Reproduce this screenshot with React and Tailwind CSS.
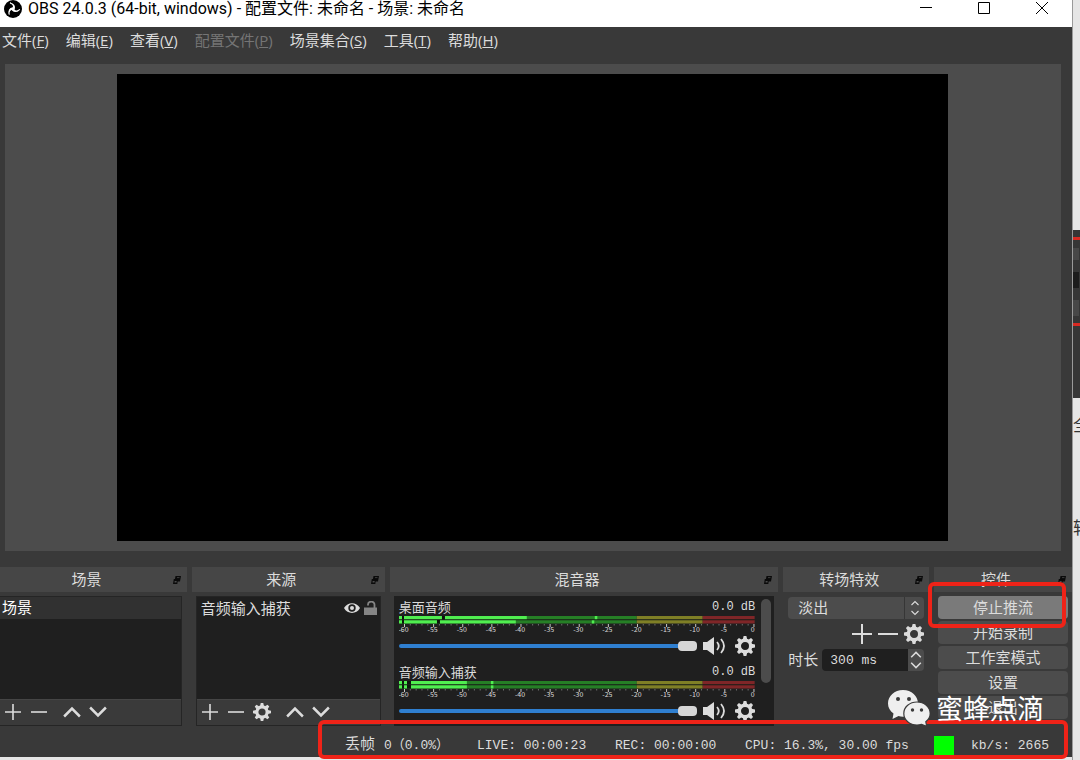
import React, { useState } from 'react';

const menuItems = [
  { label: '文件', hotkey: 'F' },
  { label: '编辑', hotkey: 'E' },
  { label: '查看', hotkey: 'V' },
  { label: '配置文件', hotkey: 'P', disabled: true },
  { label: '场景集合', hotkey: 'S' },
  { label: '工具', hotkey: 'T' },
  { label: '帮助', hotkey: 'H' },
];

// lit / peak are x positions on the meter, one entry per bar
const channels = [
  {
    name: '桌面音频',
    bars: [
      { lit: [[0, 3], [5, 43], [46, 128]], peak: 196 },
      { lit: [[0, 3], [5, 38], [41, 117]], peak: 193 },
    ],
  },
  {
    name: '音频输入捕获',
    bars: [
      { lit: [[0, 3], [5, 8], [12, 68]], peak: 92 },
      { lit: [[0, 3], [5, 8], [12, 68]], peak: 92 },
    ],
  },
];

const ObsLogo = ({ className }) => (
  <svg viewBox="0 0 18 18" className={className}>
    <circle cx="9" cy="9" r="9" fill="#000" />
    {[0, 120, 240].map((angle) => (
      <path
        key={angle}
        d="M9 9C10.800 7 10.600 4 7.600 2.300 11 4.200 12 7 9.900 9.900z"
        fill="#fff"
        stroke="#fff"
        strokeWidth="1"
        transform={`rotate(${angle - 15} 9 9)`}
      />
    ))}
  </svg>
);

const PlusIcon = ({ className }) => (
  <svg viewBox="0 0 16 16" className={className} fill="none" stroke="currentColor" strokeWidth="1.6">
    <path d="M8 0v16M0 8h16" />
  </svg>
);

const MinusIcon = ({ className }) => (
  <svg viewBox="0 0 16 16" className={className} fill="none" stroke="currentColor" strokeWidth="1.6">
    <path d="M0 8h16" />
  </svg>
);

const ChevronIcon = ({ down, className }) => (
  <svg viewBox="0 0 16 16" className={className} fill="none" stroke="currentColor" strokeWidth="2.2">
    <path d={down ? 'M1 4l7 7 7-7' : 'M1 12l7-7 7 7'} />
  </svg>
);

const GearIcon = ({ className }) => (
  <svg viewBox="0 0 20 20" className={className} fill="none" stroke="currentColor">
    <circle cx="10" cy="10" r="5.7" strokeWidth="3.4" />
    {[0, 45, 90, 135, 180, 225, 270, 315].map((angle) => (
      <path key={angle} d="M7.8 3.6L8.6 0h2.8l.8 3.6z" fill="currentColor" stroke="none" transform={`rotate(${angle} 10 10)`} />
    ))}
  </svg>
);

const SpeakerIcon = ({ className }) => (
  <svg viewBox="0 0 24 20" className={className} fill="none" stroke="currentColor" strokeWidth="1.8">
    <path d="M0 6h4L11 1v18L4 14H0z" fill="currentColor" stroke="none" />
    <path d="M14 6q3.500 4 0 8M18 3q6 7 0 14" />
  </svg>
);

const EyeIcon = ({ className }) => (
  <svg viewBox="0 0 16 12" className={className}>
    <path d="M0 6C3.500-.5 12.500-.5 16 6 12.500 12.500 3.500 12.500 0 6z" fill="currentColor" />
    <circle cx="8" cy="6" r="3.700" fill="#1f1f1f" />
    <circle cx="8" cy="6" r="2" fill="currentColor" />
  </svg>
);

const UnlockIcon = ({ className }) => (
  <svg viewBox="0 0 13 14" className={className}>
    <path d="M0 6.500h13V14H0z" fill="currentColor" />
    <path d="M4 4.500V3.500a3 2.600 0 0 1 6.500 0V7" fill="none" stroke="currentColor" strokeWidth="1.800" />
  </svg>
);

const FloatIcon = () => (
  <svg viewBox="0 0 8 8" className="h-2 w-2">
    <path d="M2.500 0H8L7 5.500H1.500z" fill="#0a0a0a" />
    <path d="M.800 3h4.200l-.700 5H0z" fill="#0a0a0a" />
    <path d="M1.700 5h2l-.200 1.500h-2z" fill="#4a4a4a" />
    <path d="M4 1.600h2.500" stroke="#4a4a4a" strokeWidth=".8" />
  </svg>
);

const WeChatIcon = ({ className }) => (
  <svg viewBox="0 0 42 36" className={className}>
    <path d="M15 0C6.500 0 0 6 0 13.500c0 4 2 7.500 5.500 10L4.500 29l6-3q2 .700 4.500.700C23.500 26.700 30 21 30 13.500S23.500 0 15 0z" fill="#efefef" />
    <circle cx="10" cy="9" r="2" fill="#3a3a3a" />
    <circle cx="21" cy="9" r="2" fill="#3a3a3a" />
    <path d="M29 12c-7.300 0-13.200 5-13.200 11.500S21.700 35 29 35q2.400 0 4.500-.700l5.200 2-.900-4.500c2.700-2.200 4.400-5 4.400-8.300C42.200 17 36.300 12 29 12z" fill="#efefef" stroke="#3a3a3a" strokeWidth="1.200" />
    <circle cx="24.500" cy="20" r="1.700" fill="#3a3a3a" />
    <circle cx="33.500" cy="20" r="1.700" fill="#3a3a3a" />
  </svg>
);

const Dock = ({ title, children }) => (
  <section className="flex min-w-0 flex-col">
    <header className="flex h-[25px] shrink-0 items-center bg-[#464646] pr-1.5">
      <h2 className="flex-1 pb-0.5 text-center">{title}</h2>
      <button type="button" aria-label={`浮动${title}`}>
        <FloatIcon />
      </button>
    </header>
    {children}
  </section>
);

const ToolButton = ({ label, children }) => (
  <button type="button" aria-label={label} className="flex h-5 w-5 items-center justify-center">
    {children}
  </button>
);

const ListToolbar = ({ withSettings }) => (
  <div className="flex h-[26px] items-center gap-1.5 border-t border-[#454545] bg-[#3a3a3a] pb-0.5 pl-[3px]">
    <ToolButton label="添加"><PlusIcon className="h-4 w-4" /></ToolButton>
    <ToolButton label="移除"><MinusIcon className="h-4 w-4" /></ToolButton>
    {withSettings && <ToolButton label="属性"><GearIcon className="h-[18px] w-[18px]" /></ToolButton>}
    <div className="ml-[7px] flex gap-1.5">
      <ToolButton label="上移"><ChevronIcon className="h-[18px] w-[18px]" /></ToolButton>
      <ToolButton label="下移"><ChevronIcon down className="h-[18px] w-[18px]" /></ToolButton>
    </div>
  </div>
);

const VolumeMeter = ({ bars }) => {
  const ticks = Array.from({ length: 61 }, (_, i) => i);
  return (
    <svg viewBox="0 0 357 20" className="block h-5 w-full">
      {bars.map((bar, i) => (
        <g key={i} transform={`translate(0 ${1 + i * 4})`}>
          <rect x="0" width="238" height="3.500" fill="#267f26" />
          <rect x="238" width="66" height="3.500" fill="#7f7f26" />
          <rect x="304" width="52" height="3.500" fill="#7f2628" />
          <rect x="0" width={bar.lit[bar.lit.length - 1][1]} height="3.500" fill="#0d150d" />
          {bar.lit.map(([from, to]) => (
            <rect key={from} x={from} width={to - from} height="3.500" fill="#50ee50" />
          ))}
          <rect x={bar.peak} width="2.500" height="3.500" fill="#50ee50" />
        </g>
      ))}
      <path d="M0 4.800H356" stroke="#141c14" strokeWidth=".8" />
      {ticks.map((t) => (
        <rect key={t} x={5 + t * 5.830} y="9" width="1" height={t % 5 === 0 ? 3 : 1.500} fill={t % 5 === 0 ? '#c8c8c8' : '#6e6e6e'} />
      ))}
      {ticks.filter((t) => t % 5 === 0).map((t) => (
        <text key={t} x={t === 60 ? 354 : 4.500 + t * 5.830} y="17.500" fontSize="7" textAnchor="middle" fill="#dcdcdc">
          {t - 60}
        </text>
      ))}
    </svg>
  );
};

const Channel = ({ name, bars }) => {
  const [volume, setVolume] = useState(100);

  return (
    <div className="flex flex-col">
      <div className="flex h-4 items-center justify-between text-[13px] leading-4">
        <span>{name}</span>
        <span className="font-['Liberation_Mono','Noto_Sans_CJK_SC',monospace] text-xs">0.0 dB</span>
      </div>
      <VolumeMeter bars={bars} />
      <div className="flex h-[21px] items-center">
        <input
          type="range"
          aria-label={name}
          value={volume}
          onChange={(e) => setVolume(Number(e.target.value))}
          className="h-1 min-w-0 flex-1 appearance-none rounded-sm bg-[#2f7fd0] [&::-webkit-slider-thumb]:h-[10px] [&::-webkit-slider-thumb]:w-[19px] [&::-webkit-slider-thumb]:appearance-none [&::-webkit-slider-thumb]:rounded-sm [&::-webkit-slider-thumb]:bg-[#d6d6d6]"
        />
        <button type="button" aria-label="静音" className="ml-1.5">
          <SpeakerIcon className="h-5 w-6" />
        </button>
        <button type="button" aria-label="音频设置" className="ml-2">
          <GearIcon className="h-5 w-5" />
        </button>
      </div>
    </div>
  );
};

const ControlButton = ({ active, children }) => (
  <button type="button" className={`h-[23px] rounded-sm pb-0.5 leading-5 ${active ? 'bg-[#7a7a7a]' : 'bg-[#4c4c4c]'}`}>
    {children}
  </button>
);

const TitleBar = () => (
  <header className="flex h-[27px] items-start justify-between bg-white pl-1 text-black">
    <div className="flex items-center gap-1.5">
      <ObsLogo className="h-[18px] w-[18px]" />
      <h1 className="font-[Roboto,'Noto_Sans_CJK_SC',sans-serif] text-base leading-[18px]">
        OBS 24.0.3 (64-bit, windows) - 配置文件: 未命名 - 场景: 未命名
      </h1>
    </div>
    <div className="flex gap-[46px] pt-0.5 pr-6">
      <button type="button" aria-label="最小化">
        <svg viewBox="0 0 12 12" className="h-3 w-3" stroke="currentColor"><path d="M0 5.500h12" /></svg>
      </button>
      <button type="button" aria-label="最大化">
        <svg viewBox="0 0 12 12" className="h-3 w-3" fill="none" stroke="currentColor"><path d="M.500.500h11v11H.500z" /></svg>
      </button>
      <button type="button" aria-label="关闭">
        <svg viewBox="0 0 12 12" className="h-3 w-3" stroke="currentColor"><path d="M0 0l12 12M12 0L0 12" /></svg>
      </button>
    </div>
  </header>
);

const MenuBar = () => (
  <nav className="flex h-[37px] items-start gap-[17px] pt-[3px] pl-0.5 font-['Open_Sans','Noto_Sans_CJK_SC',sans-serif] text-[15px] leading-5">
    {menuItems.map((item) => (
      <button key={item.label} type="button" disabled={item.disabled} className="whitespace-nowrap disabled:text-[#757575]">
        {item.label}(<span className="underline">{item.hotkey}</span>)
      </button>
    ))}
  </nav>
);

const StatusBar = () => (
  <footer className="relative flex h-[31px] items-center justify-end pt-2 pr-5">
    <div className="grid grid-cols-[132px_138px_130px_189px_37px_81px] items-center font-['Liberation_Mono','Noto_Sans_CJK_SC',monospace] text-[13px] leading-5 whitespace-nowrap">
      <span className="text-[15px]">
        丢帧 <span className="text-[13px]">0（0.0%）</span>
      </span>
      <span>LIVE: 00:00:23</span>
      <span>REC: 00:00:00</span>
      <span>CPU: 16.3%, 30.00 fps</span>
      <span className="h-5 w-5 bg-[#00ff00]" />
      <span>kb/s: 2665</span>
    </div>
    <div className="pointer-events-none absolute -top-[6px] right-1 -bottom-[2px] w-[750px] rounded-md border-4 border-[#ef2318]" />
  </footer>
);

const Background = () => (
  <aside className="w-2 shrink-0 overflow-hidden border-l border-[#9a9a9a] bg-[#e6e6e6] font-['Noto_Sans_CJK_SC',sans-serif] text-[17px] text-[#333]">
    <div className="h-[230px]" />
    <div className="flex h-[168px] flex-col bg-[#363636] pt-[7px]">
      <div className="h-[3px] bg-[#d92a22]" />
      <div className="flex h-[83px] flex-col justify-center gap-3">
        <div className="h-3 w-1.5 bg-[#484848]" />
        <div className="h-4 w-1.5 bg-[#1c1c1c]" />
        <div className="h-4 w-1.5 bg-[#484848]" />
      </div>
      <div className="h-[3px] bg-[#d92a22]" />
    </div>
    <div className="h-[103px] w-5 pt-4">全</div>
    <div className="w-5 pt-4">转</div>
  </aside>
);

const App = () => {
  const [duration, setDuration] = useState('300 ms');

  return (
    <div className="flex min-h-screen overflow-hidden bg-[#e6e6e6] font-['Noto_Sans_CJK_SC',sans-serif] text-[15px] leading-5 text-[#dcdcdc]">
      <div className="mb-[3px] flex min-w-0 flex-1 flex-col bg-[#393939]">
        <TitleBar />
        <MenuBar />

        <main className="mr-[11px] mb-4 ml-[5px] flex flex-1 bg-[#4c4c4c] pt-[10px] pr-[113px] pb-[10px] pl-28">
          <div className="flex-1 bg-black" />
        </main>

        <div className="grid grid-cols-[187fr_193fr_389fr_146fr_138fr] gap-x-[5px]">
          <Dock title="场景">
            <div className="mt-1 mr-[5px] flex flex-1 flex-col border border-l-0 border-[#252525] bg-[#1f1f1f]">
              <ul className="flex-1">
                <li className="h-[22px] bg-[#313131] pl-0.5 text-white">场景</li>
              </ul>
              <ListToolbar />
            </div>
          </Dock>

          <Dock title="来源">
            <div className="mx-1 mt-1 flex flex-1 flex-col border border-[#252525] bg-[#1f1f1f]">
              <ul className="flex-1">
                <li className="flex h-[22px] items-center pr-[3px] pl-1">
                  <span className="flex-1">音频输入捕获</span>
                  <EyeIcon className="h-3 w-4" />
                  <UnlockIcon className="ml-1 h-[14px] w-[13px] text-[#858585]" />
                </li>
              </ul>
              <ListToolbar withSettings />
            </div>
          </Dock>

          <Dock title="混音器">
            <div className="mt-1 mr-1 ml-1 flex h-[130px] gap-1.5 overflow-hidden bg-[#1f1f1f] pt-[3px] pr-[3px] pl-[5px]">
              <div className="flex min-w-0 flex-1 flex-col gap-2">
                {channels.map((channel) => (
                  <Channel key={channel.name} {...channel} />
                ))}
              </div>
              <div className="h-[84px] w-[10px] rounded-full bg-[#4c4c4c]" />
            </div>
          </Dock>

          <Dock title="转场特效">
            <div className="mt-[5px] flex flex-col gap-[5px] px-[5px]">
              <div className="grid items-center">
                <select aria-label="转场特效" className="col-start-1 row-start-1 h-[22px] appearance-none rounded-sm bg-[#4c4c4c] pb-0.5 pl-2.5">
                  <option>淡出</option>
                </select>
                <span className="pointer-events-none col-start-1 row-start-1 flex h-[22px] w-5 flex-col items-center justify-center gap-0.5 justify-self-end border-l border-[#363636]">
                  <ChevronIcon className="h-2 w-2" />
                  <ChevronIcon down className="h-2 w-2" />
                </span>
              </div>
              <div className="flex h-5 justify-end gap-1.5">
                <ToolButton label="添加转场"><PlusIcon className="h-5 w-5" /></ToolButton>
                <ToolButton label="移除转场"><MinusIcon className="h-5 w-5" /></ToolButton>
                <ToolButton label="转场属性"><GearIcon className="h-5 w-5" /></ToolButton>
              </div>
              <div className="flex h-[22px] items-center">
                <label htmlFor="duration" className="mr-1 shrink-0 pb-0.5">时长</label>
                <input
                  id="duration"
                  value={duration}
                  onChange={(e) => setDuration(e.target.value)}
                  className="h-[22px] min-w-0 flex-1 rounded-l-sm bg-[#1f1f1f] pl-2 font-['Liberation_Mono',monospace] text-[13px]"
                />
                <div className="flex h-[22px] w-4 flex-col items-center justify-center rounded-r-sm bg-[#4c4c4c]">
                  <button type="button" aria-label="增加"><ChevronIcon className="block h-[11px] w-3" /></button>
                  <button type="button" aria-label="减少"><ChevronIcon down className="block h-[11px] w-3" /></button>
                </div>
              </div>
            </div>
          </Dock>

          <div className="relative flex flex-col">
            <Dock title="控件">
              <div className="mt-1 flex flex-col gap-0.5 px-1">
                <ControlButton active>停止推流</ControlButton>
                <ControlButton>开始录制</ControlButton>
                <ControlButton>工作室模式</ControlButton>
                <ControlButton>设置</ControlButton>
                <ControlButton>退出</ControlButton>
              </div>
            </Dock>
            <div className="pointer-events-none absolute top-[15px] right-[6px] -left-[6px] h-[46px] rounded-md border-4 border-[#ef2318]" />
            <div className="pointer-events-none absolute right-7 bottom-0 z-10 flex items-center gap-1.5 text-[27px] leading-8 whitespace-nowrap text-white">
              <WeChatIcon className="h-9 w-[42px]" />
              <span>蜜蜂点滴</span>
            </div>
          </div>
        </div>

        <StatusBar />
      </div>
      <Background />
    </div>
  );
};

export default App;
